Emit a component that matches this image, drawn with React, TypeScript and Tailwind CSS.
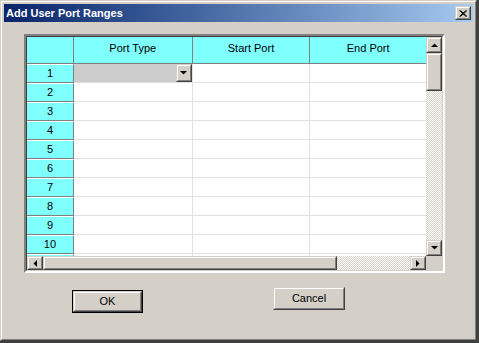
import React from 'react'

const FONT = "font-['Liberation_Sans',Arial,sans-serif]"

const ROWS = [1, 2, 3, 4, 5, 6, 7, 8, 9, 10, 11]

// raised 3d box like a classic win32 button
function Raised({ className = '', children }: { className?: string; children?: React.ReactNode }) {
  return (
    <div
      className={`border border-t-[#d4d0c8] border-l-[#d4d0c8] border-r-[#404040] border-b-[#404040] bg-[#d4d0c8] ${className}`}
    >
      <div className="w-full h-full border border-t-white border-l-white border-r-[#808080] border-b-[#808080] flex items-center justify-center">
        {children}
      </div>
    </div>
  )
}

function Arrow({ dir }: { dir: 'up' | 'down' | 'left' | 'right' }) {
  const pts = {
    up: '0,4 7,4 3.5,0.5',
    down: '0,0 7,0 3.5,3.5',
    left: '4,0 4,7 0.5,3.5',
    right: '0,0 0,7 3.5,3.5',
  }[dir]
  const vertical = dir === 'up' || dir === 'down'
  return (
    <svg width={vertical ? 7 : 4} height={vertical ? 4 : 7} viewBox={vertical ? '0 0 7 4' : '0 0 4 7'}>
      <polygon points={pts} fill="#000" />
    </svg>
  )
}

const track =
  'bg-[repeating-conic-gradient(#ffffff_0%_25%,#d4d0c8_0%_50%)] bg-[length:2px_2px]'

export default function App() {
  return (
    <div className={`w-[479px] h-[343px] bg-[#404040] ${FONT}`}>
      <div className="w-[477px] h-[341px] border border-t-[#d4d0c8] border-l-[#d4d0c8] border-r-[#404040] border-b-[#404040]">
        <div className="w-full h-full border border-t-white border-l-white border-r-[#808080] border-b-[#808080] bg-[#d4d0c8] p-[2px] flex flex-col">
          {/* title bar */}
          <div className="h-[18px] shrink-0 bg-gradient-to-r from-[#0a246a] to-[#a6caf0] flex items-center pl-[2px] pr-[2px]">
            <span className="text-white font-bold text-[11px] leading-none flex-1">Add User Port Ranges</span>
            <Raised className="w-[16px] h-[14px]">
              <svg width="8" height="7" viewBox="0 0 8 7">
                <path d="M0.5 0.5 L7 6.5 M1.5 0.5 L8 6.5 M7 0.5 L0.5 6.5 M8 0.5 L1.5 6.5" stroke="#000" strokeWidth="1" />
              </svg>
            </Raised>
          </div>

          {/* grid box */}
          <div className="ml-[20px] mt-[12px] w-[421px] h-[239px] border-2 border-t-[#808080] border-l-[#808080] border-r-white border-b-white">
            <div className="w-full h-full border border-t-[#404040] border-l-[#404040] border-r-[#d4d0c8] border-b-[#d4d0c8] flex flex-col">
              <div className="flex h-[219px]">
                {/* table */}
                <div className="w-[400px] overflow-hidden bg-white text-[11px] text-black">
                  <div className="flex h-[27px] bg-[#80ffff]">
                    <div className="w-[47px] border-r border-b border-[#808080]" />
                    <div className="w-[119px] border-r border-b border-[#808080] text-center pt-[3px]">Port Type</div>
                    <div className="w-[118px] border-r border-b border-[#808080] text-center pt-[3px]">Start Port</div>
                    <div className="w-[116px] border-b border-[#808080] text-center pt-[3px]">End Port</div>
                  </div>
                  {ROWS.map((n) => (
                    <div key={n} className="flex h-[19px]">
                      <div className="w-[47px] bg-[#80ffff] border-t border-t-white border-r border-b border-r-[#808080] border-b-[#808080] flex items-center justify-center">
                        {n}
                      </div>
                      <div
                        className={`w-[119px] border-r border-b border-[#e0e0e0] flex justify-end ${n === 1 ? 'bg-[#cccccc]' : ''}`}
                      >
                        {n === 1 && (
                          <Raised className="w-[16px] h-[18px]">
                            <Arrow dir="down" />
                          </Raised>
                        )}
                      </div>
                      <div className="w-[118px] border-r border-b border-[#e0e0e0]" />
                      <div className="w-[116px] border-b border-[#e0e0e0]" />
                    </div>
                  ))}
                </div>
                {/* vertical scrollbar */}
                <div className="w-[16px] flex flex-col">
                  <Raised className="h-[16px] shrink-0">
                    <Arrow dir="up" />
                  </Raised>
                  <Raised className="h-[38px] shrink-0" />
                  <div className={`flex-1 ${track}`} />
                  <Raised className="h-[16px] shrink-0">
                    <Arrow dir="down" />
                  </Raised>
                </div>
              </div>
              {/* horizontal scrollbar */}
              <div className="flex h-[16px]">
                <Raised className="w-[16px] shrink-0">
                  <Arrow dir="left" />
                </Raised>
                <Raised className="w-[294px] shrink-0" />
                <div className={`flex-1 ${track}`} />
                <Raised className="w-[16px] shrink-0">
                  <Arrow dir="right" />
                </Raised>
                <div className="w-[16px] shrink-0 bg-[#d4d0c8]" />
              </div>
            </div>
          </div>

          {/* buttons */}
          <div className="flex items-start text-[11px] text-black">
            <div className="ml-[68px] mt-[17px] w-[71px] h-[23px] border border-black">
              <Raised className="w-full h-full">OK</Raised>
            </div>
            <Raised className="ml-[130px] mt-[14px] w-[72px] h-[23px]">Cancel</Raised>
          </div>
        </div>
      </div>
    </div>
  )
}
